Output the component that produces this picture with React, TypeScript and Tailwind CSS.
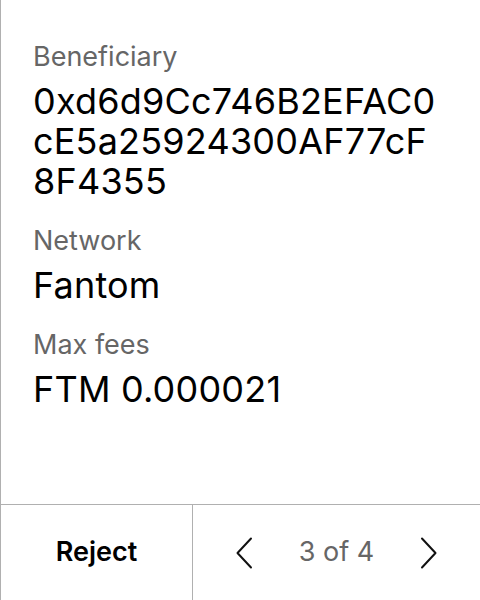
import React from "react";

interface Field {
  label: string;
  value: string;
}

const fields: Field[] = [
  { label: "Beneficiary", value: "0xd6d9Cc746B2EFAC0cE5a25924300AF77cF8F4355" },
  { label: "Network", value: "Fantom" },
  { label: "Max fees", value: "FTM 0.000021" },
];

const Chevron: React.FC<{ dir: "left" | "right" }> = ({ dir }) => (
  <svg width="18" height="32" viewBox="0 0 18 32" fill="none">
    <path
      d={dir === "left" ? "M16 1.5 L2.5 16 L16 30.5" : "M2 1.5 L15.5 16 L2 30.5"}
      stroke="#111"
      strokeWidth="2"
      strokeLinecap="round"
      strokeLinejoin="round"
    />
  </svg>
);

const App: React.FC = () => {
  return (
    <div className="w-[480px] h-[600px] bg-white flex flex-col border-l border-[#b0b0b0] font-['Inter',sans-serif] text-black">
      <div className="flex-1 pl-[32px] pr-[44px] pt-[41px]">
        {fields.map((f, i) => (
          <div key={f.label} className={i > 0 ? "mt-[24px]" : ""}>
            <div className="text-[27px] leading-[32px] text-[#666]">{f.label}</div>
            <div className="mt-[8px] text-[36px] leading-[40px] tracking-[0.2px] break-all">{f.value}</div>
          </div>
        ))}
      </div>
      <div className="h-[96px] border-t border-[#b0b0b0] flex">
        <button className="w-[192px] border-r border-[#b0b0b0] flex items-center justify-center text-[27px] font-semibold">
          Reject
        </button>
        <div className="flex-1 flex items-center justify-between px-[42px]">
          <Chevron dir="left" />
          <span className="text-[27px] text-[#666]">3 of 4</span>
          <Chevron dir="right" />
        </div>
      </div>
    </div>
  );
};

export default App;
